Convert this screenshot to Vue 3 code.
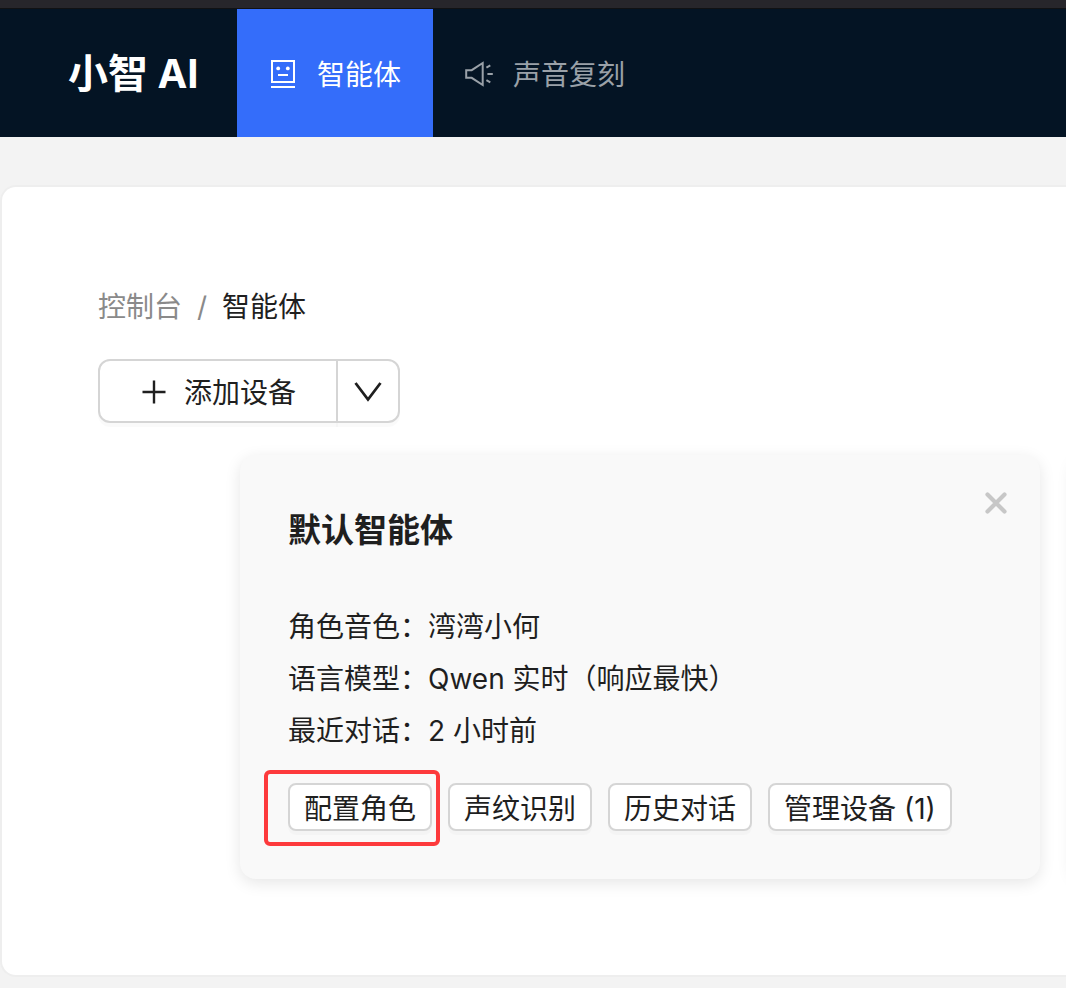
<script setup>
const rows = [
  { label: '角色音色：', value: '湾湾小何' },
  { label: '语言模型：', value: 'Qwen 实时（响应最快）' },
  { label: '最近对话：', value: '2 小时前' },
]
const actions = [
  { text: '配置角色', marked: true },
  { text: '声纹识别' },
  { text: '历史对话' },
  { text: '管理设备 (1)' },
]
</script>

<template>
  <div class="page">
    <div class="strip"></div>
    <header class="header">
      <div class="brand">小智 AI</div>
      <nav class="nav">
        <a href="#agents" class="nav-item active" aria-current="page">
          <svg class="nav-icon" viewBox="0 0 28 32" aria-hidden="true">
            <rect x="3" y="4" width="22" height="21" fill="none" stroke="currentColor" stroke-width="2" />
            <path d="M2 30H26M9 18H19" fill="none" stroke="currentColor" stroke-width="2" />
            <circle cx="9.2" cy="11.4" r="1.9" fill="currentColor" />
            <circle cx="18.8" cy="11.4" r="1.9" fill="currentColor" />
          </svg>
          <span>智能体</span>
        </a>
        <a href="#voices" class="nav-item">
          <svg class="nav-icon" viewBox="0 0 28 32" aria-hidden="true">
            <path
              d="M1.2 13.2H6.7L17.7 6V28L6.7 20.8H1.2ZM21.4 10.6L25.3 8.4M22.4 17H27.8M21.4 23.2L25.3 25.4"
              fill="none" stroke="currentColor" stroke-width="2"
            />
          </svg>
          <span>声音复刻</span>
        </a>
      </nav>
    </header>

    <main class="panel">
      <nav class="crumbs" aria-label="breadcrumb">
        <a href="#console">控制台</a>
        <span class="sep">/</span>
        <span class="current">智能体</span>
      </nav>

      <div class="split">
        <button type="button" class="split-main">
          <svg class="plus" viewBox="0 0 28 28" aria-hidden="true">
            <path d="M14 2.5V25.5M2.5 14H25.5" stroke="currentColor" stroke-width="2.4" />
          </svg>
          <span>添加设备</span>
        </button>
        <button type="button" class="split-more" aria-label="更多">
          <svg class="chevron" viewBox="0 0 28 28" aria-hidden="true">
            <path d="M1.5 5L14 21.5L26.5 5" fill="none" stroke="currentColor" stroke-width="2.8" />
          </svg>
        </button>
      </div>

      <div class="cards">
        <article class="card">
          <button type="button" class="close" aria-label="关闭">
            <svg viewBox="0 0 24 24" aria-hidden="true">
              <path d="M3.5 3.5L20.5 20.5M20.5 3.5L3.5 20.5" stroke="currentColor" stroke-width="4.2" stroke-linecap="round" />
            </svg>
          </button>
          <h2>默认智能体</h2>
          <p v-for="row in rows" :key="row.label">{{ row.label }}{{ row.value }}</p>
          <div class="actions">
            <div v-for="a in actions" :key="a.text" :class="['action', { marked: a.marked }]">
              <button type="button">{{ a.text }}</button>
            </div>
          </div>
        </article>
        <article class="card"></article>
      </div>
    </main>
  </div>
</template>

<style>
body {
  margin: 0;
  background: #f3f3f3;
}
</style>

<style scoped>
.page {
  font-family: Inter, "Noto Sans CJK SC", sans-serif;
  font-size: 28px;
  line-height: 44px;
  color: #1f1f1f;
  padding-bottom: 11px;
  overflow-x: clip;
}
.strip {
  height: 8px;
  background: #27262b;
  border-bottom: 1px solid #111214;
}
.header {
  display: flex;
  height: 128px;
  background: #041424;
  color: #fff;
}
.brand {
  box-sizing: border-box;
  width: 237px;
  padding-left: 68px;
  font-size: 40px;
  font-weight: 700;
  line-height: 130px;
  white-space: nowrap;
}
.nav {
  display: flex;
}
.nav-item {
  display: flex;
  align-items: center;
  gap: 20px;
  padding: 0 32px;
  color: #9aa1a8;
  text-decoration: none;
  white-space: nowrap;
}
.nav-item span {
  padding-top: 4px;
}
.nav-item.active {
  background: #346dfa;
  color: #fff;
}
.nav-icon {
  width: 28px;
  height: 32px;
}
.panel {
  margin-top: 48px;
  padding: 96px 0 96px 96px;
  background: #fff;
  border: 2px solid #eee;
  border-right: 0;
  border-radius: 16px 0 0 16px;
}
.crumbs {
  display: flex;
  gap: 15px;
  line-height: 48px;
}
.crumbs a,
.sep {
  color: #8a8a8a;
  text-decoration: none;
}
button {
  font: inherit;
  color: inherit;
  cursor: pointer;
}
.split {
  display: flex;
  margin-top: 28px;
}
.split button {
  display: flex;
  align-items: center;
  box-sizing: border-box;
  height: 64px;
  background: #fff;
  border: 2px solid #d5d5d5;
  box-shadow: 0 4px 0 rgba(0, 0, 0, 0.02);
}
.split .split-main {
  gap: 16px;
  padding: 2px 40px 0;
  border-radius: 12px 0 0 12px;
}
.split-main span {
  padding-top: 2px;
}
.split .split-more {
  margin-left: -2px;
  padding: 2px 16px 0;
  border-radius: 0 12px 12px 0;
}
.plus,
.chevron {
  width: 28px;
  height: 28px;
}
.cards {
  display: grid;
  grid-auto-flow: column;
  grid-auto-columns: calc(100% - 26px);
  gap: 32px;
  margin: 32px 0 0 142px;
}
.card {
  position: relative;
  box-sizing: border-box;
  padding: 48px;
  background: #f9f9f9;
  border-radius: 16px;
  box-shadow: 0 4px 16px rgba(0, 0, 0, 0.1);
}
.close {
  position: absolute;
  top: 36px;
  right: 32px;
  width: 24px;
  height: 24px;
  padding: 0;
  border: 0;
  background: none;
  color: #c7c7c7;
}
.close svg {
  display: block;
}
h2 {
  margin: 0 0 44px;
  font-size: 33px;
  font-weight: 600;
  line-height: 54px;
}
p {
  margin: 0;
  line-height: 52px;
}
.actions {
  display: flex;
  gap: 16px;
  margin-top: 26px;
}
.action {
  position: relative;
}
.action button {
  display: block;
  box-sizing: border-box;
  height: 48px;
  padding: 4px 14px 0;
  background: #fff;
  border: 2px solid #d5d5d5;
  border-radius: 8px;
  box-shadow: 0 4px 0 rgba(0, 0, 0, 0.02);
  line-height: 40px;
  white-space: nowrap;
}
.marked::after {
  content: "";
  position: absolute;
  inset: -13px -8px -15px -24px;
  border: 4px solid #fd3a3c;
  border-radius: 6px;
  pointer-events: none;
}
</style>
